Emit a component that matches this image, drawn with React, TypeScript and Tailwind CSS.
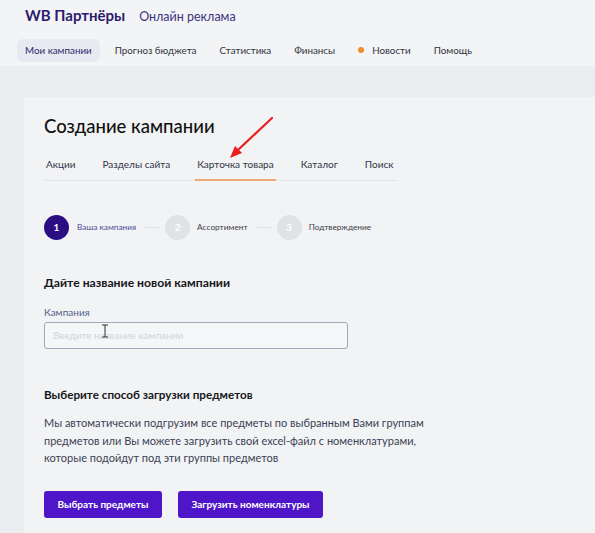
const navItems = ["Мои кампании", "Прогноз бюджета", "Статистика", "Финансы", "Новости", "Помощь"]
const tabs = ["Акции", "Разделы сайта", "Карточка товара", "Каталог", "Поиск"]
const steps = ["Ваша кампания", "Ассортимент", "Подтверждение"]

const App = () => {
  return (
    <div
      className="w-[595px] h-[533px] overflow-hidden bg-[#ebeef0] text-[#1b1b22]"
      style={{ fontFamily: "Lato, 'Open Sans', sans-serif" }}
    >
      {/* header */}
      <header className="h-[66px] bg-[#f3f4f5] px-[17px]">
        <div className="flex items-baseline gap-[14px] pl-2 pt-[4px]">
          <span className="text-[15px] font-bold text-[#2b1b6c]">WB Партнёры</span>
          <span className="text-[12.5px] text-[#3d3380]">Онлайн реклама</span>
        </div>
        <nav className="mt-[12px] flex items-center gap-[7px] text-[9.8px] text-[#30333f]">
          {navItems.map((item, i) => (
            <div
              key={item}
              className={
                i === 0
                  ? "flex h-[23px] items-center whitespace-nowrap rounded-md bg-[#e8e9f1] px-2 text-[#2d2b6e]"
                  : "flex h-[23px] items-center whitespace-nowrap px-2"
              }
            >
              {item === "Новости" && (
                <span className="mr-[8px] h-[6px] w-[6px] rounded-full bg-[#f08c2c]" />
              )}
              {item}
            </div>
          ))}
        </nav>
      </header>

      {/* card */}
      <main className="ml-[24px] mt-[31px] h-full bg-[#f2f3f4] pl-[20px] pt-[16px]">
        <h1 className="text-[18.5px] leading-[26px] font-medium text-[#111]">Создание кампании</h1>

        <div className="relative mt-[18px] w-[354px] border-b border-[#e2e4e7]">
          <div className="flex gap-[23px] text-[10px] leading-[14px] text-[#2f3445]">
            {tabs.map((tab, i) => (
              <div
                key={tab}
                className={
                  i === 2
                    ? "-mb-px whitespace-nowrap border-b-2 border-[#eca878] px-[2px] pb-[8px]"
                    : "whitespace-nowrap px-[2px] pb-[9px]"
                }
              >
                {tab}
              </div>
            ))}
          </div>
          <svg className="absolute left-[180px] top-[-45px]" width="60" height="50" viewBox="0 0 60 50">
            <line x1="48" y1="6" x2="15" y2="37" stroke="#ee1c1c" strokeWidth="2.2" strokeLinecap="round" />
            <polygon points="6,46 11,34 18,41" fill="#ee1c1c" />
          </svg>
        </div>

        {/* stepper */}
        <div className="mt-[34px] flex items-center">
          {steps.map((step, i) => (
            <div key={step} className="flex items-center">
              <div
                className={
                  i === 0
                    ? "flex h-[25px] w-[25px] items-center justify-center rounded-full bg-[#2b0e82] text-[10px] font-bold text-white"
                    : "flex h-[25px] w-[25px] items-center justify-center rounded-full bg-[#dfe3e6] text-[10px] font-bold text-white"
                }
              >
                {i + 1}
              </div>
              <span
                className={
                  i === 0
                    ? "ml-[8px] whitespace-nowrap text-[8.3px] text-[#4a4a9a]"
                    : "ml-[7px] whitespace-nowrap text-[8.3px] text-[#3a3d4d]"
                }
              >
                {step}
              </span>
              {i < 2 && <div className="ml-[8px] mr-[6px] h-px w-[15px] bg-[#dde0e4]" />}
            </div>
          ))}
        </div>

        <h2 className="mt-[35px] text-[12.2px] leading-[16px] font-bold text-[#17171d]">
          Дайте название новой кампании
        </h2>
        <label className="mt-[14px] block text-[10px] leading-[14px] text-[#53628e]">Кампания</label>
        <div className="relative mt-[3px] flex h-[27px] w-[304px] items-center rounded-[3px] border border-[#a4a6bd] bg-[#f5f6f7] px-[8px] text-[10px] text-[#d0d3da]">
          Введите название кампании
          <svg className="absolute left-[56px] top-[1px]" width="8" height="14" viewBox="0 0 8 14">
            <path d="M1 1h6M4 1v12M1 13h6" stroke="#333" strokeWidth="1" fill="none" />
          </svg>
        </div>

        <h2 className="mt-[37px] text-[11.7px] leading-[16px] font-bold text-[#17171d]">
          Выберите способ загрузки предметов
        </h2>
        <p className="mt-[12px] w-[400px] text-[11px] leading-[17.5px] text-[#3a3f55]">
          Мы автоматически подгрузим все предметы по выбранным Вами группам предметов или Вы можете загрузить свой excel-файл с номенклатурами, которые подойдут под эти группы предметов
        </p>

        <div className="mt-[24px] flex gap-[16px]">
          <button className="h-[27px] w-[118px] rounded-[3px] bg-[#4e15c9] text-[10px] font-bold text-white">
            Выбрать предметы
          </button>
          <button className="h-[27px] w-[145px] rounded-[3px] bg-[#4e15c9] text-[10px] font-bold text-white">
            Загрузить номенклатуры
          </button>
        </div>
      </main>
    </div>
  )
}

export default App
